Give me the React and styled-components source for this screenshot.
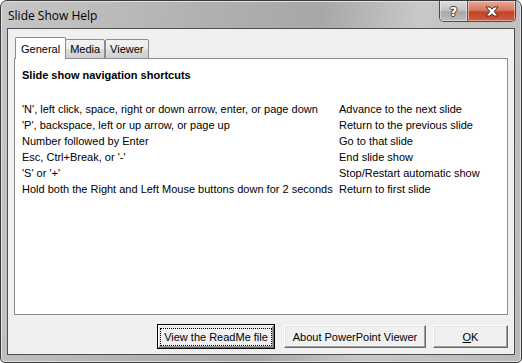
import React from "react";
import styled, { createGlobalStyle } from "styled-components";

const GlobalStyle = createGlobalStyle`
  html, body {
    margin: 0;
    padding: 0;
    background: #ffffff;
  }
  body {
    font-family: "Liberation Sans", Arial, sans-serif;
    font-size: 11px;
    color: #000;
  }
`;

const shortcuts = [
  ["'N', left click, space, right or down arrow, enter, or page down", "Advance to the next slide"],
  ["'P', backspace, left or up arrow, or page up", "Return to the previous slide"],
  ["Number followed by Enter", "Go to that slide"],
  ["Esc, Ctrl+Break, or '-'", "End slide show"],
  ["'S' or '+'", "Stop/Restart automatic show"],
  ["Hold both the Right and Left Mouse buttons down for 2 seconds", "Return to first slide"],
];

const Window = styled.div`
  box-sizing: border-box;
  width: 522px;
  height: 363px;
  border: 1px solid #3a3a3a;
  border-radius: 7px 7px 5px 5px;
  background: linear-gradient(100deg, #c6c6c6 0%, #b1b1b1 35%, #a7a7a7 55%, #c8c8c8 72%, #bababa 100%);
  box-shadow: inset 0 0 0 1px #e2e2e2;
  display: flex;
  flex-direction: column;
  overflow: hidden;
`;

const TitleBar = styled.div`
  height: 27px;
  display: flex;
  align-items: flex-start;
  justify-content: space-between;
  padding: 0 5px 0 7px;
`;

const Title = styled.span`
  font-family: "Open Sans", "Noto Sans", sans-serif;
  font-size: 12px;
  line-height: 12px;
  margin-top: 9px;
  color: #000;
`;

const Controls = styled.div`
  display: flex;
  height: 20px;
  border: 1px solid #4a4a4a;
  border-top: none;
  border-radius: 0 0 5px 5px;
  overflow: hidden;
`;

const CaptionButton = styled.div`
  width: ${(p) => p.$w}px;
  height: 100%;
  display: flex;
  align-items: center;
  justify-content: center;
  box-shadow: inset 0 0 0 1px rgba(255, 255, 255, 0.45);
  background: ${(p) =>
    p.$close
      ? "linear-gradient(180deg, #e7a898 0%, #d77a66 45%, #c3432a 55%, #d05a3f 100%)"
      : "linear-gradient(180deg, #dcdcdc 0%, #c4c4c4 45%, #a9a9a9 55%, #bcbcbc 100%)"};
  & + & {
    border-left: 1px solid #555;
  }
`;

const HelpGlyph = styled.span`
  font-family: "DejaVu Sans", sans-serif;
  font-weight: bold;
  font-size: 13px;
  color: #fff;
  text-shadow: 1px 0 0 #3c3c3c, -1px 0 0 #3c3c3c, 0 1px 0 #3c3c3c, 0 -1px 0 #3c3c3c;
`;

const Client = styled.div`
  flex: 1;
  margin: 0 6px 7px 6px;
  border: 1px solid #4e4e4e;
  background: #f0f0f0;
  display: flex;
  flex-direction: column;
  padding: 8px 6px 6px 6px;
`;

const TabStrip = styled.div`
  display: flex;
  align-items: flex-end;
  padding-left: 2px;
  height: 22px;
  position: relative;
  z-index: 1;
  margin-bottom: -1px;
`;

const Tab = styled.div`
  box-sizing: border-box;
  height: ${(p) => (p.$active ? 22 : 20)}px;
  padding: 0 ${(p) => (p.$active ? 5 : 4)}px;
  margin: 0 ${(p) => (p.$active ? -1 : 0)}px 0 ${(p) => (p.$active ? -1 : 0)}px;
  border: 1px solid #898c95;
  border-bottom: ${(p) => (p.$active ? "none" : "1px solid #898c95")};
  border-radius: 2px 2px 0 0;
  background: ${(p) =>
    p.$active ? "#ffffff" : "linear-gradient(180deg, #f2f2f2 0%, #ebebeb 50%, #dddddd 51%, #cfcfcf 100%)"};
  display: flex;
  align-items: center;
  z-index: ${(p) => (p.$active ? 2 : 1)};
`;

const Panel = styled.div`
  height: 257px;
  box-sizing: border-box;
  border: 1px solid #898c95;
  background: #ffffff;
  padding: 8px 7px;
`;

const Heading = styled.div`
  font-weight: bold;
  line-height: 16px;
  margin-bottom: 18px;
`;

const ShortcutGrid = styled.div`
  display: grid;
  grid-template-columns: 317px 1fr;
  line-height: 16px;
`;

const ButtonRow = styled.div`
  display: flex;
  justify-content: flex-end;
  margin-top: 10px;
`;

const Button = styled.button`
  box-sizing: border-box;
  height: 23px;
  width: ${(p) => p.$w}px;
  margin-left: ${(p) => p.$gap}px;
  font-family: "Liberation Sans", Arial, sans-serif;
  font-size: 11px;
  color: #000;
  background: #f0f0f0;
  border: 1px solid;
  border-color: #ffffff #696969 #696969 #ffffff;
  box-shadow: inset -1px -1px 0 #a0a0a0, inset 1px 1px 0 #e3e3e3;
  padding: 0;
  outline: ${(p) => (p.$default ? "1px solid #000" : "none")};
  display: flex;
  align-items: center;
  justify-content: center;
`;

const Focus = styled.span`
  border: 1px dotted #000;
  padding: 2px 3px;
  line-height: 12px;
`;

export default function App() {
  return (
    <>
      <GlobalStyle />
      <Window>
        <TitleBar>
          <Title>Slide Show Help</Title>
          <Controls>
            <CaptionButton $w={27}>
              <HelpGlyph>?</HelpGlyph>
            </CaptionButton>
            <CaptionButton $w={47} $close>
              <svg width="14" height="11" viewBox="0 0 14 11">
                <path
                  d="M1 1h4l2 2.2L9 1h4L9.2 5.5 13 10H9L7 7.8 5 10H1l3.8-4.5z"
                  fill="#fff"
                  stroke="#4a2a22"
                  strokeWidth="1"
                  strokeLinejoin="round"
                />
              </svg>
            </CaptionButton>
          </Controls>
        </TitleBar>
        <Client>
          <TabStrip>
            <Tab $active>General</Tab>
            <Tab>Media</Tab>
            <Tab>Viewer</Tab>
          </TabStrip>
          <Panel>
            <Heading>Slide show navigation shortcuts</Heading>
            <ShortcutGrid>
              {shortcuts.map(([keys, action]) => (
                <React.Fragment key={keys}>
                  <span>{keys}</span>
                  <span>{action}</span>
                </React.Fragment>
              ))}
            </ShortcutGrid>
          </Panel>
          <ButtonRow>
            <Button $w={116} $gap={0} $default>
              <Focus>View the ReadMe file</Focus>
            </Button>
            <Button $w={142} $gap={10}>About PowerPoint Viewer</Button>
            <Button $w={75} $gap={7}>
              <span>
                <u>O</u>K
              </span>
            </Button>
          </ButtonRow>
        </Client>
      </Window>
    </>
  );
}
